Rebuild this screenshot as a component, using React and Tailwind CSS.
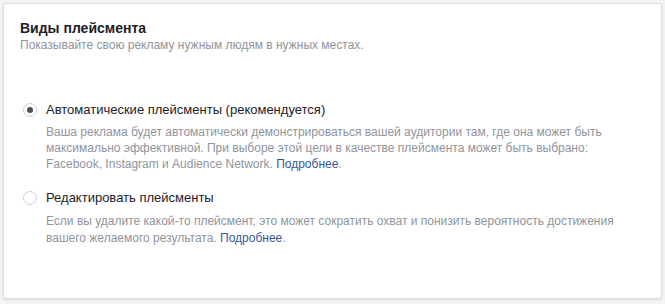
export default function App() {
  return (
    <div
      className="w-[665px] h-[304px] bg-[#f2f3f5] pt-[3px] pl-[3px] pr-[3px] pb-[5px]"
      style={{ fontFamily: '"Liberation Sans", Arial, sans-serif' }}
    >
      <div className="h-full bg-white border border-[#dddfe2] rounded-[3px] shadow-[0_1px_2px_rgba(0,0,0,0.12)] pl-4 pr-4 pt-[15px]">
        <div className="text-[14px] leading-[18px] font-bold text-[#1d2129]">Виды плейсмента</div>
        <div className="text-[12px] leading-[16px] text-[#90949c]">
          Показывайте свою рекламу нужным людям в нужных местах.
        </div>

        <div className="mt-[49px] flex flex-col">
          <div className="flex items-center h-[16px]">
            <div className="w-[14px] h-[14px] ml-[3px] rounded-full border border-[#ccd0d5] flex items-center justify-center bg-white">
              <div className="w-[6px] h-[6px] rounded-full bg-[#4b4f56]" />
            </div>
            <span className="ml-[9px] text-[13px] leading-[16px] text-[#1d2129]">
              Автоматические плейсменты (рекомендуется)
            </span>
          </div>
          <p className="ml-[26px] mt-[6px] w-[580px] text-[12px] leading-[16px] text-[#90949c]">
            Ваша реклама будет автоматически демонстрироваться вашей аудитории там, где она может быть
            максимально эффективной. При выборе этой цели в качестве плейсмента может быть выбрано:
            Facebook, Instagram и Audience Network. <span className="text-[#365899]">Подробнее</span>.
          </p>

          <div className="flex items-center h-[16px] mt-[18px]">
            <div className="w-[14px] h-[14px] ml-[3px] rounded-full border border-[#ccd0d5] bg-white" />
            <span className="ml-[9px] text-[13px] leading-[16px] text-[#1d2129]">Редактировать плейсменты</span>
          </div>
          <p className="ml-[26px] mt-[7px] w-[580px] text-[12px] leading-[17px] text-[#90949c]">
            Если вы удалите какой-то плейсмент, это может сократить охват и понизить вероятность достижения
            вашего желаемого результата. <span className="text-[#365899]">Подробнее</span>.
          </p>
        </div>
      </div>
    </div>
  );
}
